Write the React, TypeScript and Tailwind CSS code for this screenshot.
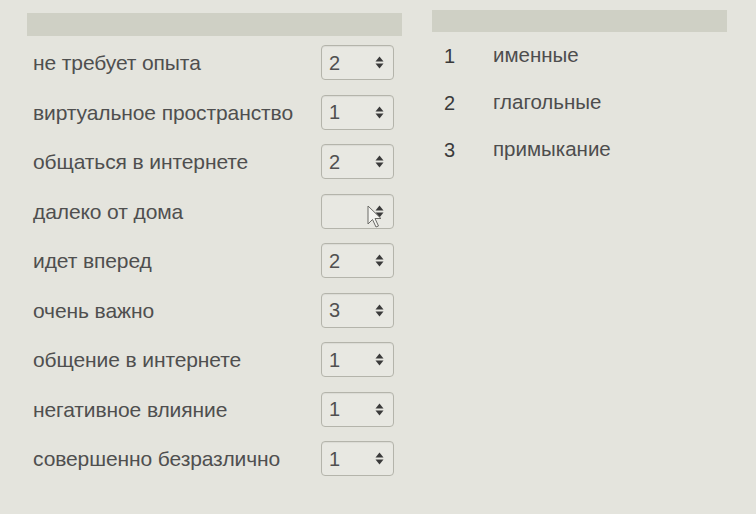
const rows: { label: string; value: string }[] = [
  { label: "не требует опыта", value: "2" },
  { label: "виртуальное пространство", value: "1" },
  { label: "общаться в интернете", value: "2" },
  { label: "далеко от дома", value: "" },
  { label: "идет вперед", value: "2" },
  { label: "очень важно", value: "3" },
  { label: "общение в интернете", value: "1" },
  { label: "негативное влияние", value: "1" },
  { label: "совершенно безразлично", value: "1" },
];

const options = [
  { n: "1", text: "именные" },
  { n: "2", text: "глагольные" },
  { n: "3", text: "примыкание" },
];

function Arrows() {
  return (
    <svg width="9" height="13" viewBox="0 0 9 13" className="shrink-0">
      <path d="M4.5 0.5 L8.5 5.5 H0.5 Z" fill="#3a3a3a" />
      <path d="M4.5 12.5 L8.5 7.5 H0.5 Z" fill="#3a3a3a" />
    </svg>
  );
}

function Select({ value, pointer }: { value: string; pointer?: boolean }) {
  return (
    <div className="relative flex h-[35px] w-[73px] shrink-0 items-center justify-between rounded-[4px] border border-[#b4b4ab] bg-[#e8e8e2] pl-[7px] pr-[9px] shadow-[inset_0_1px_1px_rgba(0,0,0,0.06)]">
      <span className="text-[20px] text-[#505050]">{value}</span>
      <Arrows />
      {pointer && (
        <svg width="16" height="24" viewBox="0 0 16 24" className="absolute left-[45px] top-[10px]">
          <path d="M1 1 V19 L5.5 14.5 L9 22 L11.5 21 L8 13.5 H14 Z" fill="#f4f4f0" stroke="#6a6a66" strokeWidth="1" strokeLinejoin="round" />
        </svg>
      )}
    </div>
  );
}

export default function App() {
  return (
    <div className="flex h-[514px] w-[756px] gap-[30px] bg-[#e4e4dd] pl-[27px] pt-[13px] font-['Liberation_Sans',Arial,sans-serif]">
      <div className="w-[375px]">
        <div className="h-[23px] bg-[#cfd0c5]" />
        <div className="pt-[2px]">
          {rows.map((r, i) => (
            <div key={i} className="flex h-[49.5px] items-center justify-between pl-[6px] pr-[8px]">
              <span className="text-[21px] tracking-[-0.1px] text-[#4f4f4f]">{r.label}</span>
              <Select value={r.value} pointer={i === 3} />
            </div>
          ))}
        </div>
      </div>
      <div className="w-[295px] -mt-[3px]">
        <div className="h-[22px] bg-[#cfd0c5]" />
        <div>
          {options.map((o) => (
            <div key={o.n} className="flex h-[47px] items-center pl-[12px]">
              <span className="w-[49px] text-[20px] text-[#3a3a3a]">{o.n}</span>
              <span className="text-[20.5px] text-[#4d4d4d]">{o.text}</span>
            </div>
          ))}
        </div>
      </div>
    </div>
  );
}
